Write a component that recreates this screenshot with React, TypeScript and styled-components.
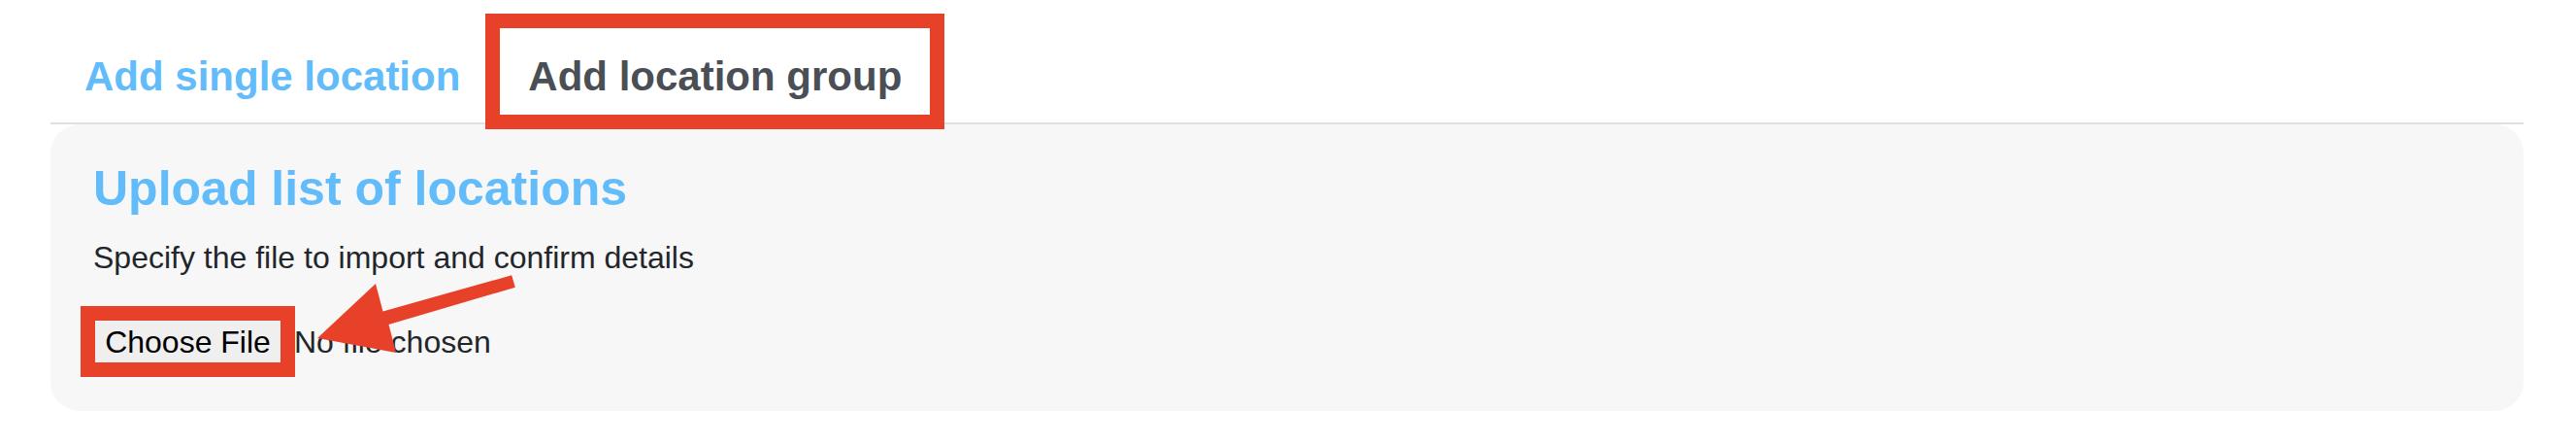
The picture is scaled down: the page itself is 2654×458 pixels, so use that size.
import React from "react";
import styled, { createGlobalStyle } from "styled-components";

const GlobalStyle = createGlobalStyle`
  html, body {
    margin: 0;
    padding: 0;
    background: #ffffff;
  }
  body {
    font-family: "Liberation Sans", Arial, Helvetica, sans-serif;
  }
`;

const Page = styled.div`
  position: relative;
  width: 2654px;
  height: 458px;
  padding: 0 54px 0 52px;
  box-sizing: border-box;
  background: #ffffff;
`;

const TabBar = styled.div`
  display: flex;
  align-items: flex-end;
  border-bottom: 2px solid #dde0e5;
`;

const Tab = styled.div<{ $active?: boolean }>`
  position: relative;
  padding: 55px 35px 23px;
  font-size: 42px;
  line-height: 48px;
  font-weight: 700;
  color: ${(p) => (p.$active ? "#4a4f56" : "#62bcfa")};
  white-space: nowrap;
  cursor: pointer;

  ${(p) =>
    p.$active &&
    `
    &::after {
      content: "";
      position: absolute;
      top: 14px;
      bottom: -7px;
      left: -9px;
      right: -9px;
      border: 15px solid #e8412a;
      pointer-events: none;
    }
  `}
`;

const Panel = styled.section`
  background: #f7f7f7;
  border-radius: 30px;
  padding: 38px 44px 49px;
`;

const Title = styled.h2`
  margin: 0;
  font-size: 50px;
  line-height: 57px;
  font-weight: 700;
  color: #62bcfa;
`;

const Hint = styled.p`
  margin: 24px 0 0;
  font-size: 32px;
  line-height: 37px;
  color: #22262b;
`;

const UploadRow = styled.div`
  display: flex;
  align-items: center;
  margin-top: 46px;
`;

const Marked = styled.span`
  position: relative;
  display: inline-flex;
  margin-left: 2px;

  &::after {
    content: "";
    position: absolute;
    inset: -15px -15px -14px -15px;
    border: 15px solid #e8412a;
    pointer-events: none;
  }
`;

const FileButton = styled.button`
  width: 191px;
  height: 44px;
  padding: 0;
  border: none;
  background: #efefef;
  font-family: "Liberation Sans", Arial, Helvetica, sans-serif;
  font-size: 32px;
  line-height: 44px;
  color: #000000;
  text-align: center;
  white-space: nowrap;
  cursor: pointer;
`;

const FileName = styled.span`
  margin-left: 14px;
  font-size: 32px;
  line-height: 44px;
  color: #22262b;
  white-space: nowrap;
`;

const Pointer = styled.svg`
  position: absolute;
  left: 320px;
  top: 276px;
  width: 220px;
  height: 95px;
  pointer-events: none;
`;

const App = () => (
  <>
    <GlobalStyle />
    <Page>
      <TabBar>
        <Tab>Add single location</Tab>
        <Tab $active>Add location group</Tab>
      </TabBar>
      <Panel>
        <Title>Upload list of locations</Title>
        <Hint>Specify the file to import and confirm details</Hint>
        <UploadRow>
          <Marked>
            <FileButton type="button">Choose File</FileButton>
          </Marked>
          <FileName>No file chosen</FileName>
        </UploadRow>
      </Panel>
      {/* arrow pointing at the file button */}
      <Pointer viewBox="320 276 220 95">
        <polygon
          fill="#e8412a"
          points="527.2,283.3 530.8,295.7 400.5,334 408,363 327,348 387,292 394.5,320.5"
        />
      </Pointer>
    </Page>
  </>
);

export default App;
